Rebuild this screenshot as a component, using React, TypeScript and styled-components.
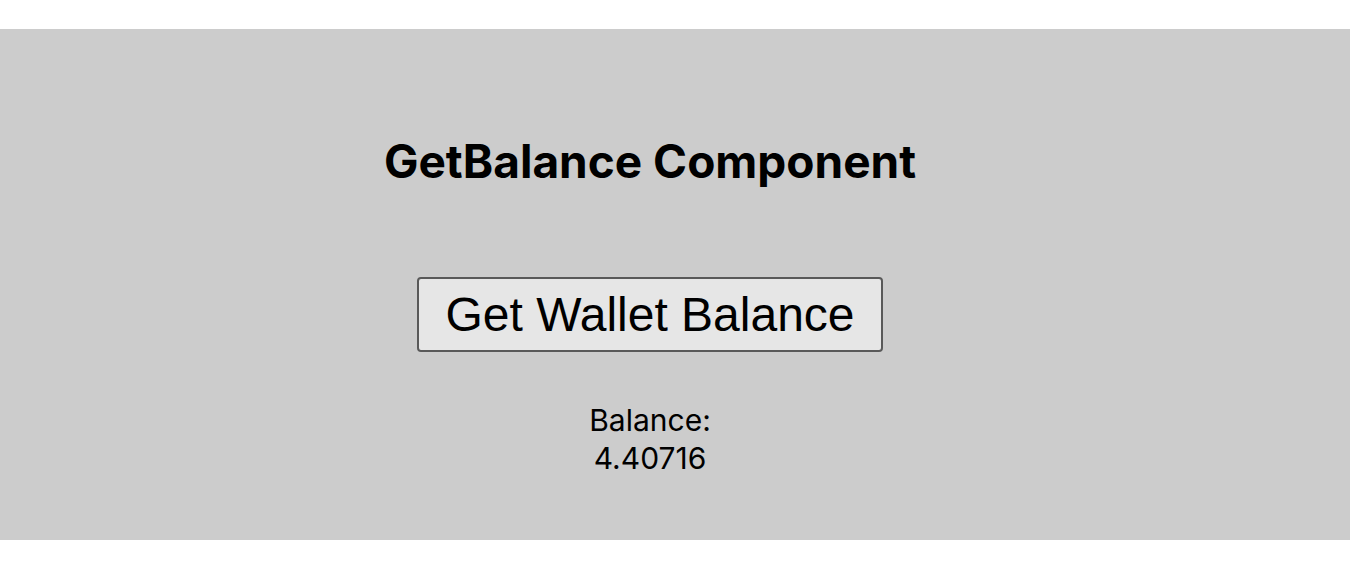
import React from "react";
import styled, { createGlobalStyle } from "styled-components";

const GlobalStyle = createGlobalStyle`
  html, body { margin: 0; padding: 0; background: #ffffff; }
  body { font-family: Inter, "Liberation Sans", sans-serif; }
`;

const Page = styled.div`
  padding-top: 29px;
`;

const Panel = styled.section`
  background: #cccccc;
  height: 511px;
  box-sizing: border-box;
  display: flex;
  flex-direction: column;
  align-items: center;
  padding: 105px 50px 0 0;
`;

const Title = styled.h1`
  margin: 0;
  font-family: Inter, "Liberation Sans", sans-serif;
  font-weight: 700;
  font-size: 46px;
  line-height: 54px;
  color: #000;
`;

const Button = styled.button`
  margin-top: 89px;
  font-family: "Liberation Sans", Arial, sans-serif;
  font-size: 48px;
  line-height: 53px;
  padding: 9px 26px;
  background: #e6e6e6;
  color: #000;
  border: 2px solid #595959;
  border-radius: 4px;
  cursor: pointer;
`;

const Result = styled.div`
  margin-top: 49px;
  font-family: Inter, "Liberation Sans", sans-serif;
  font-size: 30px;
  line-height: 38px;
  text-align: center;
  color: #000;
`;

export default function App() {
  return (
    <>
      <GlobalStyle />
      <Page>
        <Panel>
          <Title>GetBalance Component</Title>
          <Button>Get Wallet Balance</Button>
          <Result>
            <div>Balance:</div>
            <div>4.40716</div>
          </Result>
        </Panel>
      </Page>
    </>
  );
}
